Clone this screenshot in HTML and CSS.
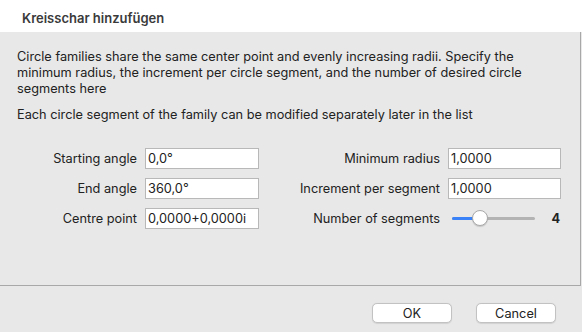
FILE: index.html
```html
<!DOCTYPE html>
<html lang="de">
<head>
    <meta charset="UTF-8">
    <title>Kreisschar hinzufügen</title>
    <link rel="stylesheet" href="styles.css">
</head>
<body>
    <div class="dialog">
        <div class="title-bar">Kreisschar hinzufügen</div>

        <div class="panel">
            <p class="intro">Circle families share the same center point and evenly increasing radii. Specify the minimum radius, the increment per circle segment, and the number of desired circle segments here</p>
            <p class="note">Each circle segment of the family can be modified separately later in the list</p>

            <div class="form-grid">
                <label class="field-label">Starting angle</label>
                <input class="field" type="text" value="0,0°">
                <label class="field-label">Minimum radius</label>
                <input class="field" type="text" value="1,0000">

                <label class="field-label">End angle</label>
                <input class="field" type="text" value="360,0°">
                <label class="field-label">Increment per segment</label>
                <input class="field" type="text" value="1,0000">

                <label class="field-label">Centre point</label>
                <input class="field" type="text" value="0,0000+0,0000i">
                <label class="field-label">Number of segments</label>
                <div class="slider-row">
                    <div class="slider">
                        <div class="track-fill"></div>
                        <div class="thumb"></div>
                    </div>
                    <span class="slider-value">4</span>
                </div>
            </div>
        </div>

        <div class="footer">
            <button class="btn">OK</button>
            <button class="btn">Cancel</button>
        </div>
    </div>
</body>
</html>
```

FILE: styles.css
```css
body {
    margin: 0;
    padding: 0;
    font-family: Inter, 'Liberation Sans', Arial, sans-serif;
    font-size: 12.75px;
    color: #222;
    background-color: #e8e8e8;
}

.dialog {
    width: 582px;
    height: 332px;
    display: flex;
    flex-direction: column;
    overflow: hidden;
}

.title-bar {
    height: 32px;
    box-sizing: border-box;
    padding: 10px 0 0 22px;
    background-color: #ffffff;
    font-size: 13px;
    font-weight: 600;
    color: #3a3a3a;
}

.panel {
    height: 254px;
    box-sizing: border-box;
    padding: 17px 0 0 17px;
    border-right: 1px solid #a8a8a8;
    border-bottom: 1px solid #a8a8a8;
    margin-right: 1px;
}

.intro,
.note {
    margin: 0;
    line-height: 16px;
    width: 540px;
}

.note {
    margin-top: 10px;
}

.form-grid {
    margin-top: 25px;
    display: grid;
    grid-template-columns: 120px 114px 173px 113px;
    column-gap: 8px;
    row-gap: 9px;
    align-items: center;
}

.field-label {
    text-align: right;
    white-space: nowrap;
}

.field {
    height: 21px;
    box-sizing: border-box;
    border: 1px solid #b8b8b8;
    border-radius: 0;
    background-color: #ffffff;
    padding: 0 2px;
    font-family: inherit;
    font-size: 12.75px;
    color: #222;
    outline: none;
}

.slider-row {
    height: 21px;
    display: flex;
    align-items: center;
    padding-left: 4px;
}

.slider {
    position: relative;
    width: 83px;
    height: 3px;
    border-radius: 2px;
    background-color: #b3b3b3;
}

.track-fill {
    width: 28px;
    height: 3px;
    border-radius: 2px;
    background-color: #3a82f7;
}

.thumb {
    position: absolute;
    left: 20px;
    top: -7px;
    width: 16px;
    height: 16px;
    box-sizing: border-box;
    border-radius: 50%;
    background-color: #ffffff;
    border: 1px solid #a9a9a9;
    box-shadow: 0 1px 1px rgba(0, 0, 0, 0.15);
}

.slider-value {
    margin-left: auto;
    margin-right: 1px;
    font-weight: bold;
}

.footer {
    flex: 1;
    display: flex;
    justify-content: flex-end;
    align-items: flex-start;
    gap: 24px;
    padding: 17px 26px 0 0;
}

.btn {
    width: 80px;
    height: 20px;
    box-sizing: border-box;
    border: 1px solid #c2c2c2;
    border-radius: 5px;
    background-color: #ffffff;
    font-family: inherit;
    font-size: 12.75px;
    color: #222;
    padding: 0;
    box-shadow: 0 0.5px 1px rgba(0, 0, 0, 0.1);
}
```
